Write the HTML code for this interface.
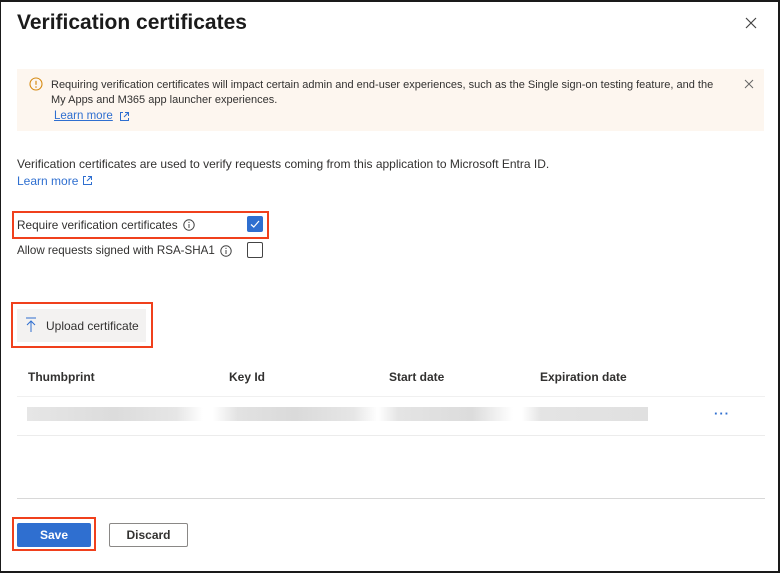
<!DOCTYPE html>
<html><head><meta charset="utf-8"><style>
*{margin:0;padding:0;box-sizing:border-box}
body{width:780px;height:573px;background:#fff;font-family:"Liberation Sans",sans-serif;color:#323130;position:relative;overflow:hidden}
.frame{position:absolute;left:0;top:0;width:780px;height:573px;border:2px solid #1a1a1a;border-left-width:1px}
.a{position:absolute;white-space:nowrap}
.t{font-size:12px}
.link{color:#2f6fd0}
.red{position:absolute;border:2px solid #f0401c}
.hdr{font-size:12px;font-weight:bold;color:#323130}
.bar{position:absolute;height:14px;background:linear-gradient(90deg,#e6e6e6 0%,#dcdcdc 50%,#e6e6e6 85%,#fff 100%)}
</style></head><body>
<div class="frame"></div>
<div class="a" style="left:17px;top:11px;font-size:21px;font-weight:bold;color:#1b1b1b">Verification certificates</div>
<svg class="a" style="left:745px;top:17px" width="12" height="12"><path d="M1 1L11 11M11 1L1 11" stroke="#444" stroke-width="1.2"/></svg>

<div class="a" style="left:17px;top:69px;width:747px;height:62px;background:#fdf6ef"></div>
<svg class="a" style="left:29px;top:77px" width="14" height="14"><circle cx="7" cy="7" r="6" fill="none" stroke="#d68a12" stroke-width="1.1"/><path d="M7 3.8V7.8" stroke="#d68a12" stroke-width="1.2"/><circle cx="7" cy="10" r=".8" fill="#d68a12"/></svg>
<div class="a t" style="left:51px;top:79px;font-size:11px">Requiring verification certificates will impact certain admin and end-user experiences, such as the Single sign-on testing feature, and the</div>
<div class="a t" style="left:51px;top:94px;font-size:11px">My Apps and M365 app launcher experiences.</div>
<div class="a t link" style="left:54px;top:110px;font-size:11.5px;text-decoration:underline">Learn more</div>
<svg class="a" style="left:119px;top:111px" width="11" height="11"><path d="M4 1.5H1.5V9.5H9.5V7M6 1.5H9.5V5M9.5 1.5L5 6" fill="none" stroke="#2f6fd0"/></svg>
<svg class="a" style="left:744px;top:79px" width="10" height="10"><path d="M1 1L9 9M9 1L1 9" stroke="#666" stroke-width="1"/></svg>

<div class="a t" style="left:17px;top:157px">Verification certificates are used to verify requests coming from this application to Microsoft Entra ID.</div>
<div class="a t link" style="left:17px;top:174px">Learn more</div>
<svg class="a" style="left:82px;top:175px" width="11" height="11"><path d="M4 1.5H1.5V9.5H9.5V7M6 1.5H9.5V5M9.5 1.5L5 6" fill="none" stroke="#2f6fd0"/></svg>

<div class="red" style="left:12px;top:211px;width:257px;height:28px"></div>
<div class="a t" style="left:17px;top:218px;font-size:11.8px">Require verification certificates</div>
<svg class="a" style="left:183px;top:219px" width="12" height="12"><circle cx="6" cy="6" r="5.2" fill="none" stroke="#444"/><path d="M6 5V9" stroke="#444"/><circle cx="6" cy="3.4" r=".6" fill="#444"/></svg>
<div class="a" style="left:247px;top:216px;width:16px;height:16px;background:#2f6fd0;border-radius:2px"></div>
<svg class="a" style="left:247px;top:216px" width="16" height="16"><path d="M4 8.5L6.8 11L12 5" fill="none" stroke="#fff" stroke-width="1.2"/></svg>
<div class="a t" style="left:17px;top:244px;font-size:11.6px">Allow requests signed with RSA-SHA1</div>
<svg class="a" style="left:220px;top:245px" width="12" height="12"><circle cx="6" cy="6" r="5.2" fill="none" stroke="#444"/><path d="M6 5V9" stroke="#444"/><circle cx="6" cy="3.4" r=".6" fill="#444"/></svg>
<div class="a" style="left:247px;top:242px;width:16px;height:16px;border:1.2px solid #444;border-radius:2px"></div>

<div class="red" style="left:11px;top:302px;width:142px;height:46px"></div>
<div class="a" style="left:17px;top:309px;width:129px;height:33px;background:#f3f2f1"></div>
<svg class="a" style="left:25px;top:317px" width="12" height="16"><path d="M1 1H11M6 4V15M2 8L6 4L10 8" fill="none" stroke="#2f6fd0" stroke-width="1"/></svg>
<div class="a t" style="left:46px;top:319px">Upload certificate</div>

<div class="a hdr" style="left:28px;top:370px">Thumbprint</div>
<div class="a hdr" style="left:229px;top:370px">Key Id</div>
<div class="a hdr" style="left:389px;top:370px">Start date</div>
<div class="a hdr" style="left:540px;top:370px">Expiration date</div>
<div class="a" style="left:17px;top:396px;width:748px;height:1px;background:#f0f0f0"></div>
<div class="bar" style="left:27px;top:407px;width:176px"></div>
<div class="bar" style="left:213px;top:407px;width:165px;background:linear-gradient(90deg,#fff 0%,#e2e2e2 15%,#dadada 50%,#e6e6e6 85%,#fff 100%)"></div>
<div class="bar" style="left:378px;top:407px;width:135px;background:linear-gradient(90deg,#fff 0%,#e4e4e4 15%,#dcdcdc 70%,#fff 100%)"></div>
<div class="bar" style="left:522px;top:407px;width:126px;background:linear-gradient(90deg,#fff 0%,#e4e4e4 15%,#e0e0e0 100%)"></div>
<div class="a" style="left:714px;top:406px;font-size:13px;color:#2f6fd0;letter-spacing:1px;font-weight:bold">···</div>
<div class="a" style="left:17px;top:435px;width:748px;height:1px;background:#ececec"></div>

<div class="a" style="left:17px;top:498px;width:748px;height:1px;background:#d8d8d8"></div>
<div class="red" style="left:12px;top:517px;width:84px;height:34px"></div>
<div class="a" style="left:17px;top:523px;width:74px;height:24px;background:#2f6fd0;border-radius:2px;color:#fff;font-size:12px;font-weight:bold;text-align:center;line-height:24px">Save</div>
<div class="a" style="left:109px;top:523px;width:79px;height:24px;border:1px solid #8a8886;border-radius:2px;font-size:12px;font-weight:bold;text-align:center;line-height:22px">Discard</div>
</body></html>
